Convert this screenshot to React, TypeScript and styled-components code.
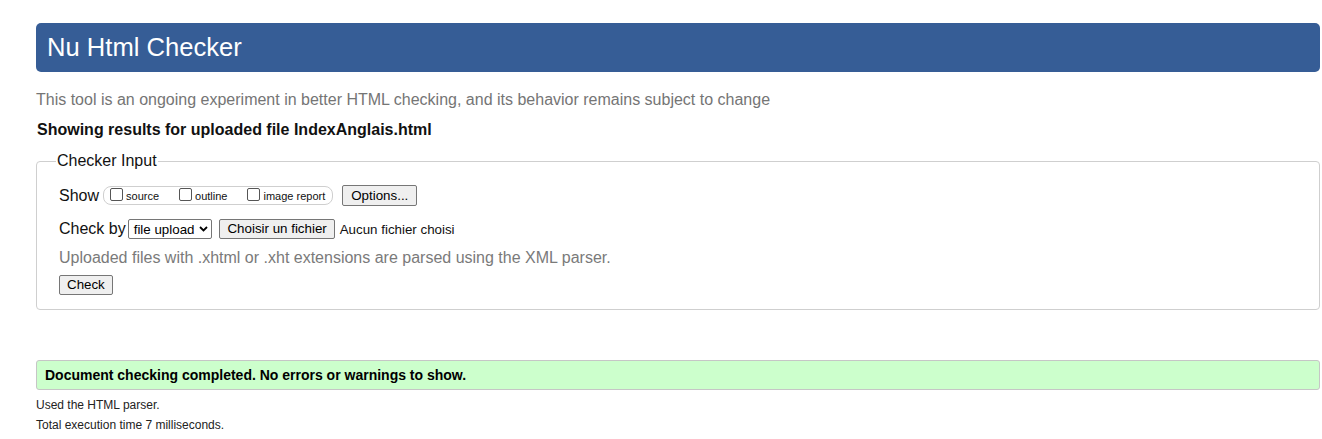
import React from "react";
import styled, { createGlobalStyle } from "styled-components";

const Global = createGlobalStyle`
  html, body { margin: 0; padding: 0; background: #fff; }
  body { font-family: "Liberation Sans", Arial, sans-serif; color: #000; }
`;

const Page = styled.div`
  padding: 23px 2px 0 36px;
`;

const Header = styled.h1`
  margin: 0;
  height: 49px;
  box-sizing: border-box;
  background: #365d96;
  border-radius: 5px;
  color: #fff;
  font-size: 25.6px;
  font-weight: normal;
  line-height: 49px;
  padding-left: 11px;
`;

const Tagline = styled.p`
  margin: 18px 0 0 0;
  font-size: 16px;
  line-height: 19px;
  color: #757575;
`;

const Showing = styled.p`
  margin: 11px 0 0 1px;
  font-size: 16px;
  font-weight: bold;
  line-height: 19px;
  color: #111;
`;

const Fieldset = styled.fieldset`
  margin: 13px 0 0 0;
  padding: 2px 21px 14px 22px;
  border: 1px solid #cfcfcf;
  border-radius: 4px;
  min-width: 0;
`;

const Legend = styled.legend`
  font-size: 16px;
  padding: 0 1px;
  margin-left: -3px;
  color: #111;
`;

const Row = styled.div<{ $mt?: number }>`
  display: flex;
  align-items: center;
  margin-top: ${(p) => p.$mt ?? 0}px;
  font-size: 16px;
  color: #111;
`;

const Label = styled.span`
  font-size: 16px;
  margin-right: 3px;
`;

const Group = styled.span`
  display: inline-flex;
  align-items: center;
  height: 17px;
  border: 1px solid #cfcfcf;
  border-radius: 8px;
  padding: 0 7px 0 6px;
  margin-left: 1px;
`;

const Check = styled.label<{ $gap?: number }>`
  display: inline-flex;
  align-items: center;
  font-size: 11px;
  margin-right: ${(p) => p.$gap ?? 0}px;
  color: #111;
`;

const Box = styled.input`
  appearance: none;
  width: 13px;
  height: 13px;
  margin: 0 3px 0 0;
  border: 1px solid #555;
  border-radius: 2px;
  background: #fff;
  box-sizing: border-box;
  position: relative;
  top: -1px;
`;

const Button = styled.button<{ $ml?: number; $h?: number; $px?: number }>`
  font-family: "Liberation Sans", Arial, sans-serif;
  font-size: 13.33px;
  color: #000;
  background: #efefef;
  border: 1px solid #767676;
  border-radius: 2px;
  height: ${(p) => p.$h ?? 20}px;
  padding: 0 ${(p) => p.$px ?? 7}px;
  margin-left: ${(p) => p.$ml ?? 0}px;
  line-height: 18px;
`;

const SelectWrap = styled.span`
  display: inline-flex;
  align-items: center;
  height: 20px;
  box-sizing: border-box;
  border: 1px solid #767676;
  border-radius: 2px;
  padding: 0 3px 0 5px;
  font-size: 13.33px;
  gap: 5px;
  background: #fff;
  color: #000;
  margin-left: -1px;
`;

const FileName = styled.span`
  font-size: 13.33px;
  margin-left: 5px;
  color: #111;
`;

const Note = styled.p`
  margin: 9px 0 0 0;
  font-size: 16px;
  line-height: 19px;
  color: #7a7a7a;
`;

const Success = styled.div`
  margin-top: 50px;
  height: 30px;
  box-sizing: border-box;
  border: 1px solid #c6c6c6;
  border-radius: 3px;
  background: #ccffcc;
  font-size: 14px;
  font-weight: bold;
  line-height: 28px;
  padding-left: 8px;
  color: #000;
`;

const Small = styled.p<{ $mt: number }>`
  margin: ${(p) => p.$mt}px 0 0 0;
  font-size: 12px;
  line-height: 14px;
  color: #222;
`;

export default function App() {
  return (
    <>
      <Global />
      <Page>
        <Header>Nu Html Checker</Header>
        <Tagline>
          This tool is an ongoing experiment in better HTML checking, and its behavior remains subject to change
        </Tagline>
        <Showing>Showing results for uploaded file IndexAnglais.html</Showing>
        <Fieldset>
          <Legend>Checker Input</Legend>
          <Row $mt={13}>
            <Label>Show</Label>
            <Group>
              <Check $gap={20}>
                <Box type="checkbox" />
                source
              </Check>
              <Check $gap={20}>
                <Box type="checkbox" />
                outline
              </Check>
              <Check>
                <Box type="checkbox" />
                image report
              </Check>
            </Group>
            <Button $ml={9} $h={21} $px={8}>Options...</Button>
          </Row>
          <Row $mt={13}>
            <Label>Check by</Label>
            <SelectWrap>
              file upload
              <svg width="9" height="6" viewBox="0 0 9 6">
                <path d="M1 1 L4.5 4.5 L8 1" fill="none" stroke="#000" strokeWidth="1.8" />
              </svg>
            </SelectWrap>
            <Button $ml={7}>Choisir un fichier</Button>
            <FileName>Aucun fichier choisi</FileName>
          </Row>
          <Note>Uploaded files with .xhtml or .xht extensions are parsed using the XML parser.</Note>
          <Row $mt={8}>
            <Button>Check</Button>
          </Row>
        </Fieldset>
        <Success>Document checking completed. No errors or warnings to show.</Success>
        <Small $mt={8}>Used the HTML parser.</Small>
        <Small $mt={6}>Total execution time 7 milliseconds.</Small>
      </Page>
    </>
  );
}
